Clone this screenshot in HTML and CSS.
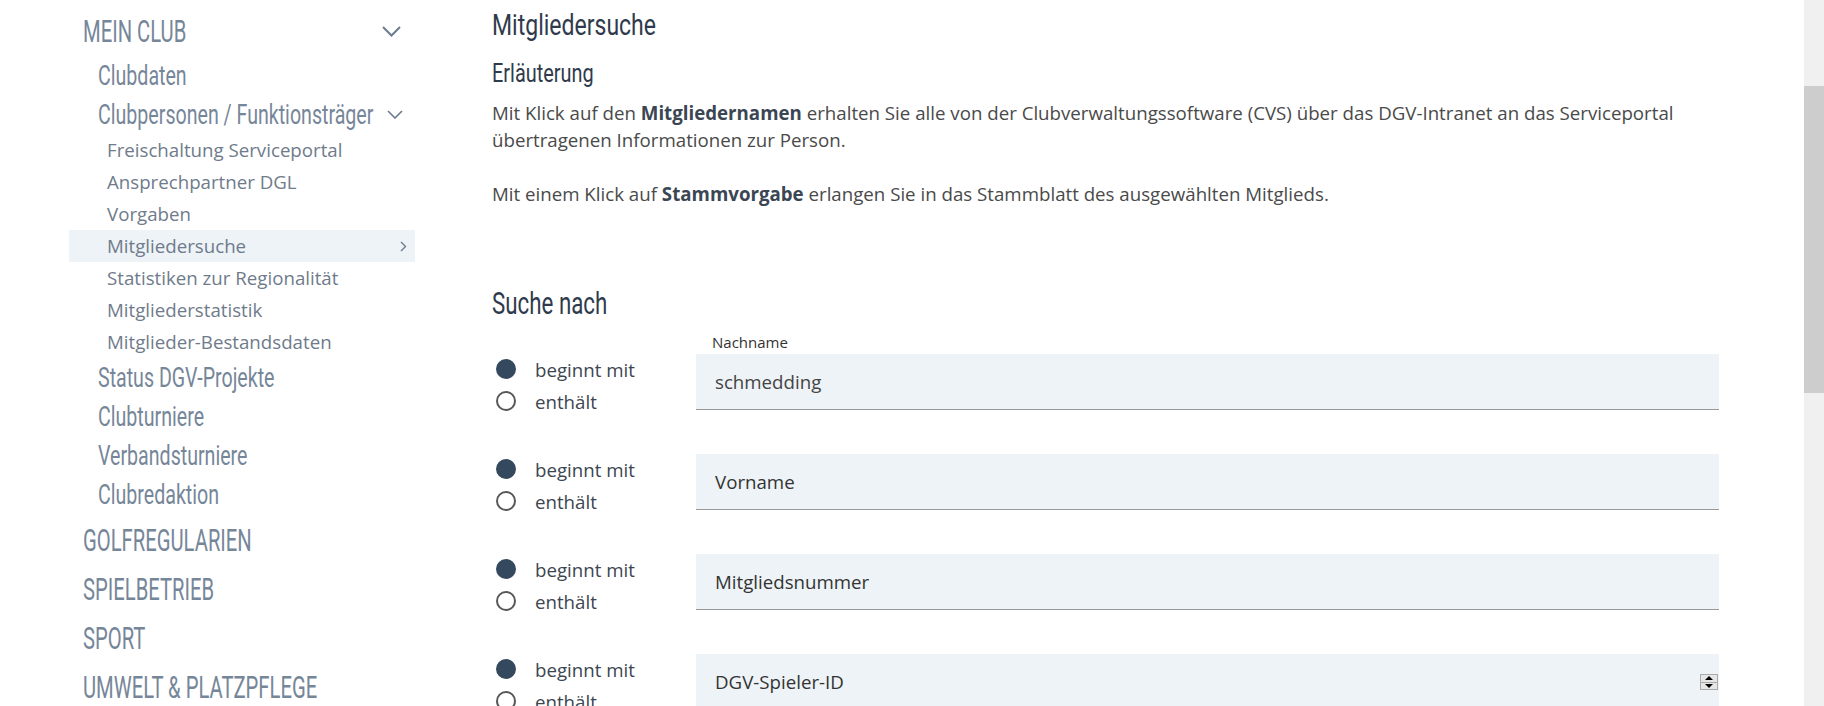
FILE: index.html
```html
<!DOCTYPE html>
<html lang="de">
<head>
  <meta charset="UTF-8">
  <meta name="viewport" content="width=device-width, initial-scale=1.0">
  <title>Mitgliedersuche</title>
  <link rel="stylesheet" href="styles.css">
</head>
<body>
  <div class="layout">
    <nav class="sidebar">
      <ul class="menu">
        <li class="open">
          <div class="item l1">
            <span class="label">MEIN CLUB</span>
            <svg class="chev-down" width="19" height="11" viewBox="0 0 19 11"><polyline points="1,1 9.5,9.5 18,1"/></svg>
          </div>
          <ul>
            <li><div class="item l2"><span class="label">Clubdaten</span></div></li>
            <li>
              <div class="item l2">
                <span class="label">Clubpersonen / Funktionsträger</span>
                <svg class="chev-down small" width="16" height="9" viewBox="0 0 16 9"><polyline points="1,1 8,8 15,1"/></svg>
              </div>
              <ul>
                <li><div class="item l3">Freischaltung Serviceportal</div></li>
                <li><div class="item l3">Ansprechpartner DGL</div></li>
                <li><div class="item l3">Vorgaben</div></li>
                <li>
                  <div class="item l3 active">
                    <span>Mitgliedersuche</span>
                    <svg class="chev-right" width="7" height="11" viewBox="0 0 7 11"><polyline points="1,1 5.5,5.5 1,10"/></svg>
                  </div>
                </li>
                <li><div class="item l3">Statistiken zur Regionalität</div></li>
                <li><div class="item l3">Mitgliederstatistik</div></li>
                <li><div class="item l3">Mitglieder-Bestandsdaten</div></li>
              </ul>
            </li>
            <li><div class="item l2"><span class="label">Status DGV-Projekte</span></div></li>
            <li><div class="item l2"><span class="label">Clubturniere</span></div></li>
            <li><div class="item l2"><span class="label">Verbandsturniere</span></div></li>
            <li><div class="item l2"><span class="label">Clubredaktion</span></div></li>
          </ul>
        </li>
        <li><div class="item l1"><span class="label">GOLFREGULARIEN</span></div></li>
        <li><div class="item l1"><span class="label">SPIELBETRIEB</span></div></li>
        <li><div class="item l1"><span class="label">SPORT</span></div></li>
        <li><div class="item l1"><span class="label">UMWELT &amp; PLATZPFLEGE</span></div></li>
      </ul>
    </nav>

    <main class="content">
      <h1><span class="label">Mitgliedersuche</span></h1>
      <h2><span class="label">Erläuterung</span></h2>
      <p>Mit Klick auf den <strong>Mitgliedernamen</strong> erhalten Sie alle von der Clubverwaltungssoftware (CVS) über das DGV-Intranet an das Serviceportal übertragenen Informationen zur Person.</p>
      <p>Mit einem Klick auf <strong>Stammvorgabe</strong> erlangen Sie in das Stammblatt des ausgewählten Mitglieds.</p>

      <h3><span class="label">Suche nach</span></h3>
      <form class="search">
        <div class="row">
          <div class="match">
            <label><input type="radio" name="m-nachname" checked> beginnt mit</label>
            <label><input type="radio" name="m-nachname"> enthält</label>
          </div>
          <div class="field">
            <label class="float" for="nachname">Nachname</label>
            <input id="nachname" type="text" value="schmedding">
          </div>
        </div>
        <div class="row">
          <div class="match">
            <label><input type="radio" name="m-vorname" checked> beginnt mit</label>
            <label><input type="radio" name="m-vorname"> enthält</label>
          </div>
          <div class="field">
            <input type="text" placeholder="Vorname">
          </div>
        </div>
        <div class="row">
          <div class="match">
            <label><input type="radio" name="m-nummer" checked> beginnt mit</label>
            <label><input type="radio" name="m-nummer"> enthält</label>
          </div>
          <div class="field">
            <input type="text" placeholder="Mitgliedsnummer">
          </div>
        </div>
        <div class="row">
          <div class="match">
            <label><input type="radio" name="m-id" checked> beginnt mit</label>
            <label><input type="radio" name="m-id"> enthält</label>
          </div>
          <div class="field">
            <input type="text" placeholder="DGV-Spieler-ID">
            <span class="spin"><i class="up"></i><i class="down"></i></span>
          </div>
        </div>
      </form>
    </main>
  </div>

  <div class="scrollbar"><div class="thumb"></div></div>
</body>
</html>
```

FILE: styles.css
```css
html, body {
  margin: 0;
  height: 100%;
}
body {
  display: flex;
  overflow: hidden;
  font-family: "Open Sans", "Liberation Sans", sans-serif;
  font-size: 18.7px;
  color: #4a4a4a;
  background: #fff;
}
ul { list-style: none; margin: 0; padding: 0; }

.layout {
  flex: 1;
  display: grid;
  grid-template-columns: 346px 1227px;
  column-gap: 77px;
  padding-left: 69px;
  align-items: start;
}

/* narrow display face for menu and headings: Roboto squeezed sideways */
.l1, .l2, h1, h2, h3 {
  font-family: Roboto, "Liberation Sans", sans-serif;
  font-weight: normal;
  white-space: nowrap;
}
.label {
  display: inline-block;
  transform-origin: 0 50%;
}

/* sidebar */
.sidebar { padding-top: 7px; }
.item {
  display: flex;
  align-items: center;
  justify-content: space-between;
  white-space: nowrap;
}
.item .label {
  flex: 1 1 0;
  min-width: 0;
}
.l1 {
  font-size: 32px;
  line-height: 49px;
  padding: 0 14px;
  color: #768699;
}
.l1 .label { transform: scaleX(.632); }
.menu > li.open { padding-bottom: 2px; }
.l2 {
  font-size: 28px;
  line-height: 39px;
  padding: 0 12px 0 29px;
  color: #768699;
}
.l2 .label { transform: scaleX(.70); }
.l3 {
  font-size: 18.7px;
  line-height: 32px;
  padding: 0 8px 0 38px;
  color: #6f7b8b;
}
.l3.active { background: #eef3f7; }

.chev-down polyline,
.chev-right polyline {
  fill: none;
  stroke: #6c7b8e;
  stroke-width: 2;
}
.chev-down.small polyline { stroke-width: 1.6; }
.chev-right polyline { stroke-width: 1.4; }

/* main column */
.content { padding-top: 7px; }
h1 {
  font-size: 29.5px;
  line-height: 36px;
  margin: 0;
  color: #2f3b4c;
}
h1 .label { transform: scaleX(.78); }
h2 {
  font-size: 26px;
  line-height: 32px;
  margin: 14px 0 10px;
  color: #2f3b4c;
}
h2 .label { transform: scaleX(.765); }
p {
  line-height: 27px;
  margin: 0 0 27px;
}
strong { color: #3b4654; }
h3 {
  font-size: 31px;
  line-height: 38px;
  margin: 78px 0 30px;
  color: #2f3b4c;
}
h3 .label { transform: scaleX(.72); }

/* search form */
.search {
  display: flex;
  flex-direction: column;
  gap: 36px;
}
.row {
  display: grid;
  grid-template-columns: 204px 1fr;
  align-items: start;
}
.match {
  display: flex;
  flex-direction: column;
  padding-left: 4px;
}
.match label {
  display: flex;
  align-items: center;
  gap: 19px;
  height: 32px;
  color: #3c4650;
}
.match input {
  appearance: none;
  margin: 0;
  width: 20px;
  height: 20px;
  border: 2px solid #585858;
  border-radius: 50%;
  box-sizing: border-box;
}
.match input:checked {
  background: #34495e;
  border-color: #34495e;
}

.field {
  position: relative;
  margin-top: 1px;
}
.field input {
  display: block;
  width: 100%;
  height: 56px;
  box-sizing: border-box;
  border: none;
  border-bottom: 1px solid #999;
  background: #eef3f7;
  padding: 0 19px;
  font-family: "Open Sans", sans-serif;
  font-size: 18.7px;
  color: #444;
  outline: none;
}
.field input::placeholder {
  color: #333;
  opacity: 1;
}
.float {
  position: absolute;
  left: 16px;
  top: -22px;
  font-size: 15px;
  line-height: 20px;
  color: #333;
}

/* number stepper on the last field */
.spin {
  position: absolute;
  right: 1px;
  top: 20px;
  width: 18px;
  height: 16px;
  display: flex;
  flex-direction: column;
  border: 1px solid #aaa;
  box-sizing: border-box;
  background: #e6e6e6;
}
.spin i {
  flex: 1;
  display: flex;
  align-items: center;
  justify-content: center;
}
.spin i + i { border-top: 1px solid #aaa; }
.spin .up::before,
.spin .down::before {
  content: "";
  border-left: 4px solid transparent;
  border-right: 4px solid transparent;
}
.spin .up::before { border-bottom: 4px solid #000; }
.spin .down::before { border-top: 4px solid #000; }

/* page scrollbar */
.scrollbar {
  width: 20px;
  background: #f0f0f0;
}
.thumb {
  margin-top: 86px;
  height: 307px;
  background: #cdcdcd;
}
```
